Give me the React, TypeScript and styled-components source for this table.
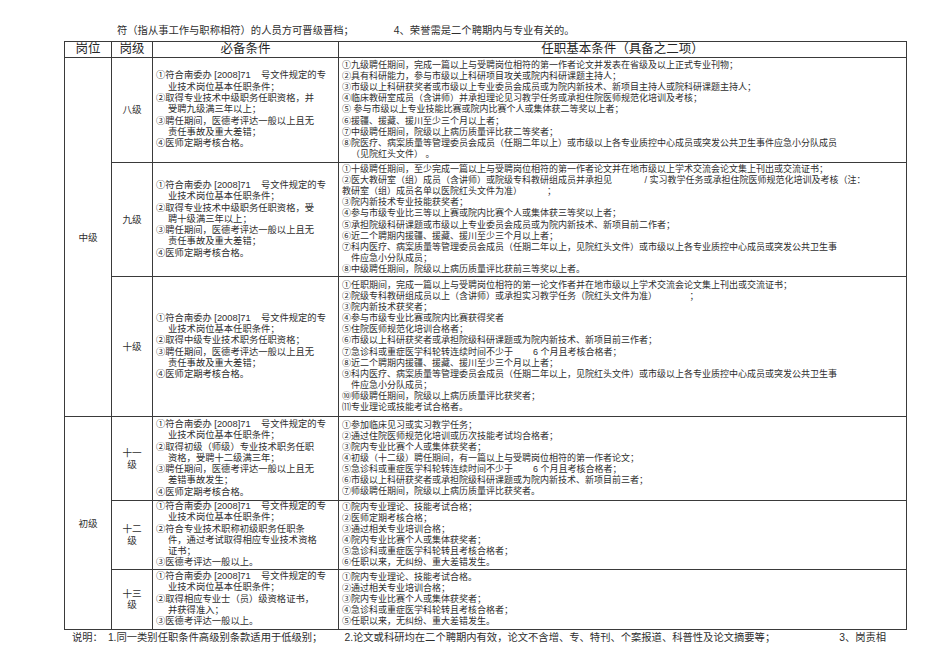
import React from "react";
import styled, { createGlobalStyle } from "styled-components";

const GlobalStyle = createGlobalStyle`
  html, body {
    margin: 0;
    padding: 0;
    background: #fff;
  }
  body {
    font-family: "Liberation Sans", "Noto Sans CJK SC", sans-serif;
    color: #2e2e2e;
  }
`;

type Block = { grade: string[]; h: number; req: string[]; cond: string[] };
type Band = { name: string; rows: Block[] };

// lines starting with "+" are wrapped continuations (hanging indent)
const reqHead = ["①符合南委办 [2008]71    号文件规定的专", "+业技术岗位基本任职条件；"];

const bands: Band[] = [
  {
    name: "中级",
    rows: [
      {
        grade: ["八级"],
        h: 105,
        req: [
          ...reqHead,
          "②取得专业技术中级职务任职资格，并",
          "+受聘九级满三年以上；",
          "③聘任期间，医德考评达一般以上且无",
          "+责任事故及重大差错；",
          "④医师定期考核合格。",
        ],
        cond: [
          "①九级聘任期间，完成一篇以上与受聘岗位相符的第一作者论文并发表在省级及以上正式专业刊物；",
          "②具有科研能力，参与市级以上科研项目攻关或院内科研课题主持人；",
          "③市级以上科研获奖者或市级以上专业委员会成员或为院内新技术、新项目主持人或院科研课题主持人；",
          "④临床教研室成员（含讲师）并承担理论见习教学任务或承担住院医师规范化培训及考核；",
          "⑤ 参与市级以上专业技能比赛或院内比赛个人或集体获二等奖以上者；",
          "⑥援疆、援藏、援川至少三个月以上者；",
          "⑦中级聘任期间，院级以上病历质量评比获二等奖者；",
          "⑧院医疗、病案质量等管理委员会成员（任期二年以上）或市级以上各专业质控中心成员或突发公共卫生事件应急小分队成员",
          "+（见院红头文件） 。",
        ],
      },
      {
        grade: ["九级"],
        h: 114,
        req: [
          ...reqHead,
          "②取得专业技术中级职务任职资格，受",
          "+聘十级满三年以上；",
          "③聘任期间，医德考评达一般以上且无",
          "+责任事故及重大差错；",
          "④医师定期考核合格。",
        ],
        cond: [
          "①十级聘任期间，至少完成一篇以上与受聘岗位相符的第一作者论文并在地市级以上学术交流会论文集上刊出或交流证书；",
          "②医大教研室（组）成员（含讲师）或院级专科教研组成员并承担见             / 实习教学任务或承担住院医师规范化培训及考核（注：",
          "教研室（组）成员名单以医院红头文件为准）          ；",
          "③院内新技术专业技能获奖者；",
          "④参与市级专业比三等以上赛或院内比赛个人或集体获三等奖以上者；",
          "⑤承担院级科研课题或市级以上专业委员会成员或为院内新技术、新项目前二作者；",
          "⑥近二个聘期内援疆、援藏、援川至少三个月以上者；",
          "⑦科内医疗、病案质量等管理委员会成员（任期二年以上，见院红头文件）或市级以上各专业质控中心成员或突发公共卫生事",
          "+件应急小分队成员；",
          "⑧中级聘任期间，院级以上病历质量评比获前三等奖以上者。",
        ],
      },
      {
        grade: ["十级"],
        h: 140,
        req: [
          ...reqHead,
          "②取得中级专业技术职务任职资格；",
          "③聘任期间，医德考评达一般以上且无",
          "+责任事故及重大差错；",
          "④医师定期考核合格。",
        ],
        cond: [
          "①任职期间，完成一篇以上与受聘岗位相符的第一论文作者并在地市级以上学术交流会论文集上刊出或交流证书；",
          "②院级专科教研组成员以上（含讲师）或承担实习教学任务（院红头文件为准）             ；",
          "③院内新技术获奖者；",
          "④参与市级专业比赛或院内比赛获得奖者",
          "⑤住院医师规范化培训合格者；",
          "⑥市级以上科研获奖者或承担院级科研课题或为院内新技术、新项目前三作者；",
          "⑦急诊科或重症医学科轮转连续时间不少于        6 个月且考核合格者；",
          "⑧近二个聘期内援疆、援藏、援川至少三个月以上者；",
          "⑨科内医疗、病案质量等管理委员会成员（任期二年以上，见院红头文件）或市级以上各专业质控中心成员或突发公共卫生事",
          "+件应急小分队成员；",
          "⑩师级聘任期间，院级以上病历质量评比获奖者；",
          "⑾专业理论或技能考试合格者。",
        ],
      },
    ],
  },
  {
    name: "初级",
    rows: [
      {
        grade: ["十一", "级"],
        h: 84,
        req: [
          ...reqHead,
          "②取得初级（师级）专业技术职务任职",
          "+资格，受聘十二级满三年；",
          "③聘任期间，医德考评达一般以上且无",
          "+差错事故发生；",
          "④医师定期考核合格。",
        ],
        cond: [
          "①参加临床见习或实习教学任务；",
          "②通过住院医师规范化培训或历次技能考试均合格者；",
          "③院内专业比赛个人或集体获奖者；",
          "④初级（十二级）聘任期间，有一篇以上与受聘岗位相符的第一作者论文；",
          "⑤急诊科或重症医学科轮转连续时间不少于        6 个月且考核合格者；",
          "⑥市级以上科研获奖者或承担院级科研课题或为院内新技术、新项目前三者；",
          "⑦师级聘任期间，院级以上病历质量评比获奖者。",
        ],
      },
      {
        grade: ["十二", "级"],
        h: 67,
        req: [
          ...reqHead,
          "②符合专业技术职称初级职务任职条",
          "+件，通过考试取得相应专业技术资格",
          "+证书；",
          "③医德考评达一般以上。",
        ],
        cond: [
          "①院内专业理论、技能考试合格；",
          "②医师定期考核合格；",
          "③通过相关专业培训合格；",
          "④院内专业比赛个人或集体获奖者；",
          "⑤急诊科或重症医学科轮转且考核合格者；",
          "⑥任职以来，无纠纷、重大差错发生。",
        ],
      },
      {
        grade: ["十三", "级"],
        h: 60,
        req: [
          ...reqHead,
          "②取得相应专业士（员）级资格证书，",
          "+并获得准入；",
          "③医德考评达一般以上。",
        ],
        cond: [
          "①院内专业理论、技能考试合格。",
          "②通过相关专业培训合格；",
          "③院内专业比赛个人或集体获奖者；",
          "④急诊科或重症医学科轮转且考核合格者；",
          "⑤任职以来，无纠纷、重大差错发生。",
        ],
      },
    ],
  },
];

const Page = styled.div`
  padding: 24px 0 0 64px;
`;

const NoteRow = styled.div`
  display: flex;
  height: 14px;
  line-height: 14px;
  font-size: 10.3px;
  padding-left: 53px;
  margin-bottom: 3px;
  white-space: nowrap;
`;

const FootRow = styled(NoteRow)`
  padding-left: 8px;
  margin: 1px 0 0;
`;

const NotePart = styled.span<{ $ml?: number }>`
  margin-left: ${(p) => p.$ml ?? 0}px;
`;

const Sheet = styled.table`
  border-collapse: collapse;
  table-layout: fixed;
  width: 842px;
  border: 1px solid #333;
`;

const Row = styled.tr<{ $h: number }>`
  height: ${(p) => p.$h}px;
`;

const HeadCell = styled.th`
  border: 1px solid #3a3a3a;
  padding: 0;
  font-size: 12.5px;
  line-height: 15px;
  font-weight: 400;
  text-align: center;
  color: #262626;
`;

const BandCell = styled.td`
  border: 1px solid #3a3a3a;
  padding: 0;
  font-size: 9.6px;
  text-align: center;
  vertical-align: middle;
`;

const GradeCell = styled(BandCell)`
  line-height: 11.7px;
`;

const ReqCell = styled.td`
  border: 1px solid #3a3a3a;
  padding: 0 2px 0 3px;
  font-size: 9.3px;
  line-height: 11.3px;
  vertical-align: middle;
  overflow: hidden;
`;

const CondCell = styled(ReqCell)`
  font-size: 9px;
  line-height: 11.1px;
`;

const Line = styled.div<{ $indent: number }>`
  white-space: pre;
  padding-left: ${(p) => p.$indent}px;
`;

// circled item numbers take a full CJK cell, as in the printed sheet
const Mark = styled.span`
  display: inline-block;
  width: 1em;
  text-align: left;
`;

const isMark = (c: string) => {
  const code = c.codePointAt(0) ?? 0;
  return code >= 0x2460 && code <= 0x249b;
};

function Lines({ items, indent }: { items: string[]; indent: number }) {
  return (
    <>
      {items.map((raw, i) => {
        const cont = raw.startsWith("+");
        const t = cont ? raw.slice(1) : raw;
        const head = t.charAt(0);
        return (
          <Line key={i} $indent={cont ? indent : 0}>
            {isMark(head) ? (
              <>
                <Mark>{head}</Mark>
                {t.slice(1)}
              </>
            ) : (
              t
            )}
          </Line>
        );
      })}
    </>
  );
}

export default function App() {
  return (
    <Page>
      <GlobalStyle />
      <NoteRow>
        <NotePart>符（指从事工作与职称相符）的人员方可晋级晋档；</NotePart>
        <NotePart $ml={40}>4、荣誉需是二个聘期内与专业有关的。</NotePart>
      </NoteRow>
      <Sheet>
        <colgroup>
          <col style={{ width: 47 }} />
          <col style={{ width: 41 }} />
          <col style={{ width: 186 }} />
          <col style={{ width: 568 }} />
        </colgroup>
        <tbody>
          <Row $h={16}>
            <HeadCell>岗位</HeadCell>
            <HeadCell>岗级</HeadCell>
            <HeadCell>必备条件</HeadCell>
            <HeadCell>任职基本条件（具备之二项）</HeadCell>
          </Row>
          {bands.map((band) =>
            band.rows.map((r, i) => (
              <Row key={band.name + i} $h={r.h}>
                {i === 0 && <BandCell rowSpan={band.rows.length}>{band.name}</BandCell>}
                <GradeCell>
                  {r.grade.map((g) => (
                    <div key={g}>{g}</div>
                  ))}
                </GradeCell>
                <ReqCell>
                  <Lines items={r.req} indent={12} />
                </ReqCell>
                <CondCell>
                  <Lines items={r.cond} indent={9} />
                </CondCell>
              </Row>
            ))
          )}
        </tbody>
      </Sheet>
      <FootRow>
        <NotePart>说明：</NotePart>
        <NotePart $ml={5}>1.同一类别任职条件高级别条款适用于低级别；</NotePart>
        <NotePart $ml={22}>2.论文或科研均在二个聘期内有效，论文不含增、专、特刊、个案报道、科普性及论文摘要等；</NotePart>
        <NotePart $ml={64}>3、岗责相</NotePart>
      </FootRow>
    </Page>
  );
}
